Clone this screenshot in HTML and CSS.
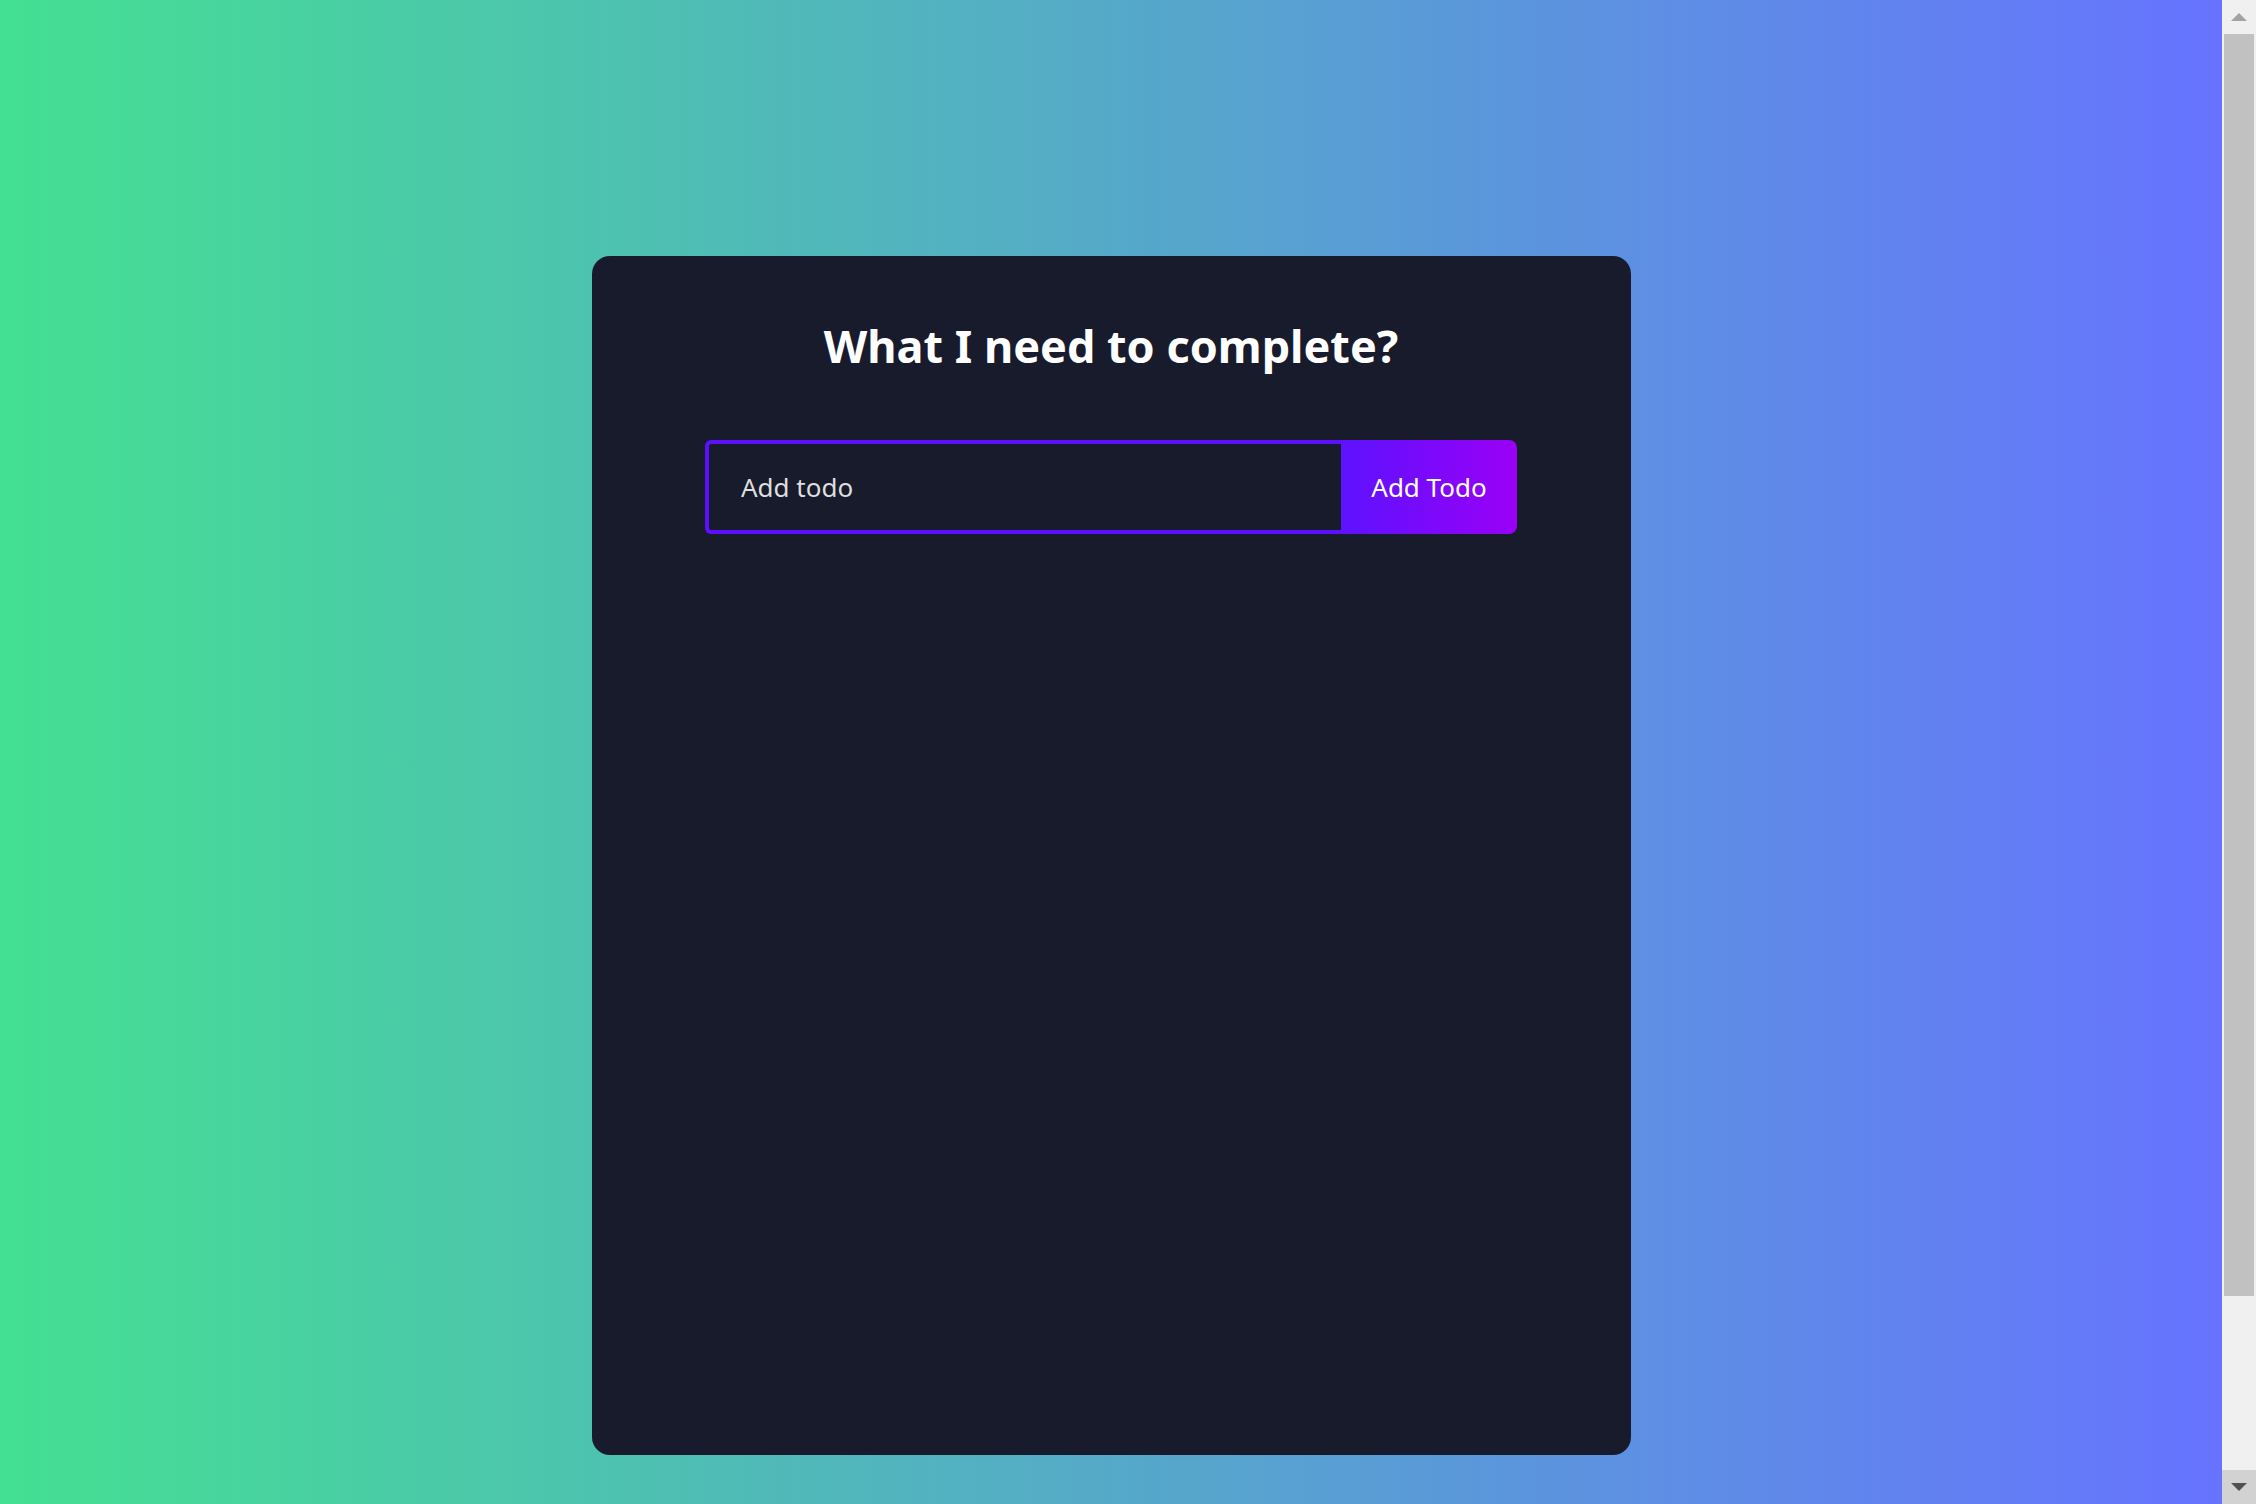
FILE: index.html
```html
<!DOCTYPE html>
<html lang="en">
<head>
<meta charset="utf-8">
<title>Todo App</title>
<link rel="stylesheet" href="styles.css">
</head>
<body>
<main class="page">
  <section class="todo-app">
    <h1 class="title">What I need to complete?</h1>
    <form class="todo-form">
      <input class="todo-input" type="text" placeholder="Add todo">
      <button class="todo-button" type="button">Add Todo</button>
    </form>
  </section>
</main>
<div class="scrollbar" aria-hidden="true">
  <div class="sb-btn sb-up"><span class="tri-up"></span></div>
  <div class="sb-track"><div class="sb-thumb"></div></div>
  <div class="sb-btn sb-down"><span class="tri-down"></span></div>
</div>
</body>
</html>
```
FILE: styles.css
```css
html, body {
  margin: 0;
  padding: 0;
  height: 100%;
  overflow: hidden;
}
body {
  display: flex;
  font-family: "Noto Sans", "DejaVu Sans", sans-serif;
}
.page {
  flex: 1;
  background: linear-gradient(90deg, #44e092 0%, #6673ff 100%);
  padding-top: 256px;
  box-sizing: border-box;
}
.todo-app {
  width: 1039px;
  height: 1199px;
  margin: 0 auto;
  background: #181b2c;
  border-radius: 18px;
  display: flex;
  flex-direction: column;
  align-items: center;
}
.title {
  margin: 60px 0 0;
  font-size: 45px;
  line-height: 60px;
  font-weight: 700;
  color: #ffffff;
}
.todo-form {
  display: flex;
  margin-top: 64px;
}
.todo-input {
  width: 636px;
  height: 94px;
  box-sizing: border-box;
  border: 4px solid #5d0fff;
  border-right: none;
  border-radius: 6px 0 0 6px;
  background: transparent;
  padding: 0 0 0 32px;
  font-family: inherit;
  font-size: 26px;
  color: #ffffff;
  outline: none;
}
.todo-input::placeholder {
  color: #dedede;
  opacity: 1;
}
.todo-button {
  width: 176px;
  height: 94px;
  border: none;
  border-radius: 0 8px 8px 0;
  background: linear-gradient(90deg, #5d12ff 0%, #9a00f6 100%);
  color: #ffffff;
  font-family: inherit;
  font-size: 26px;
  padding: 0;
}
.scrollbar {
  width: 34px;
  height: 100%;
  background: #f0f0f0;
  display: flex;
  flex-direction: column;
}
.sb-btn {
  height: 34px;
  display: flex;
  align-items: center;
  justify-content: center;
  flex-shrink: 0;
}
.sb-down {
  background: #d2d2d2;
}
.tri-up {
  width: 0;
  height: 0;
  border-left: 8px solid transparent;
  border-right: 8px solid transparent;
  border-bottom: 8px solid #a3a3a3;
}
.tri-down {
  width: 0;
  height: 0;
  border-left: 8px solid transparent;
  border-right: 8px solid transparent;
  border-top: 8px solid #505050;
}
.sb-track {
  flex: 1;
  padding: 0 2px;
}
.sb-thumb {
  height: 1262px;
  background: #c1c1c1;
}
```
